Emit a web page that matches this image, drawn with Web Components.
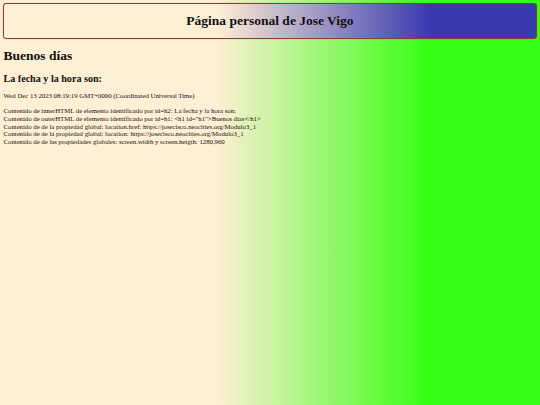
<!DOCTYPE html>
<html lang="es">
<head>
<meta charset="utf-8">
<title>Página personal de Jose Vigo</title>
<style>
  html, body { margin: 0; height: 100%; }
  body {
    background: linear-gradient(to right, #ffefd5 40%, #39ff14 79%);
    font-family: "Liberation Serif", "Times New Roman", serif;
    color: #111;
  }
</style>
</head>
<body>
<page-main></page-main>
<script>
class SiteHeader extends HTMLElement {
  constructor() {
    super();
    this.attachShadow({ mode: 'open' });
    this.shadowRoot.innerHTML = `
      <style>
        :host {
          display: flex;
          align-items: center;
          justify-content: center;
          box-sizing: border-box;
          height: 36px;
          border: 1px solid #85402f;
          border-radius: 3px;
          box-shadow: 0 0 1px rgba(133, 64, 47, 0.7);
          background: linear-gradient(to right, #ffefd5 40%, #3a3ab0 80%);
          font-size: 13.5px;
          font-weight: bold;
        }
      </style>
      <slot></slot>
    `;
  }
}

class GreetingBlock extends HTMLElement {
  constructor() {
    super();
    this.attachShadow({ mode: 'open' });
    this.shadowRoot.innerHTML = `
      <style>
        :host { display: block; }
        h1 { margin: 9px 0 0; font-size: 13.5px; line-height: 16px; }
        h2 { margin: 9px 0 0; font-size: 10.1px; line-height: 12px; }
        p { margin: 7px 0 0; font-size: 6.75px; line-height: 8px; }
      </style>
      <h1 id="h1"><slot name="greeting"></slot></h1>
      <h2 id="h2"><slot name="label"></slot></h2>
      <p><slot name="date"></slot></p>
    `;
  }
}

class InfoLines extends HTMLElement {
  constructor() {
    super();
    this.attachShadow({ mode: 'open' });
    this.shadowRoot.innerHTML = `
      <style>
        :host { display: block; margin-top: 7px; font-size: 6.75px; line-height: 7.75px; }
        div { white-space: nowrap; }
      </style>
      <div id="lines"></div>
    `;
  }

  connectedCallback() {
    const box = this.shadowRoot.querySelector('#lines');
    const lines = [
      'Contenido de innerHTML de elemento identificado por id=h2: La fecha y la hora son:',
      'Contenido de outerHTML de elemento identificado por id=h1: <h1 id="h1">Buenos días</h1>',
      'Contenido de de la propiedad global: location.href: https://josecisco.neocities.org/Modulo3_1',
      'Contenido de de la propiedad global: location: https://josecisco.neocities.org/Modulo3_1',
      'Contenido de de las propiedades globales: screen.width y screen.heigth: 1280,960'
    ];
    lines.forEach(text => {
      const row = document.createElement('div');
      row.textContent = text;
      box.appendChild(row);
    });
  }
}

class PageMain extends HTMLElement {
  constructor() {
    super();
    this.attachShadow({ mode: 'open' });
    this.shadowRoot.innerHTML = `
      <style>
        :host { display: block; padding: 3px 3px 0 3.5px; }
        site-header { margin-left: -0.5px; }
      </style>
      <site-header>Página personal de Jose Vigo</site-header>
      <greeting-block>
        <span slot="greeting">Buenos días</span>
        <span slot="label">La fecha y la hora son:</span>
        <span slot="date">Wed Dec 13 2023 08:19:19 GMT+0000 (Coordinated Universal Time)</span>
      </greeting-block>
      <info-lines></info-lines>
    `;
  }
}

customElements.define('site-header', SiteHeader);
customElements.define('greeting-block', GreetingBlock);
customElements.define('info-lines', InfoLines);
customElements.define('page-main', PageMain);
</script>
</body>
</html>
